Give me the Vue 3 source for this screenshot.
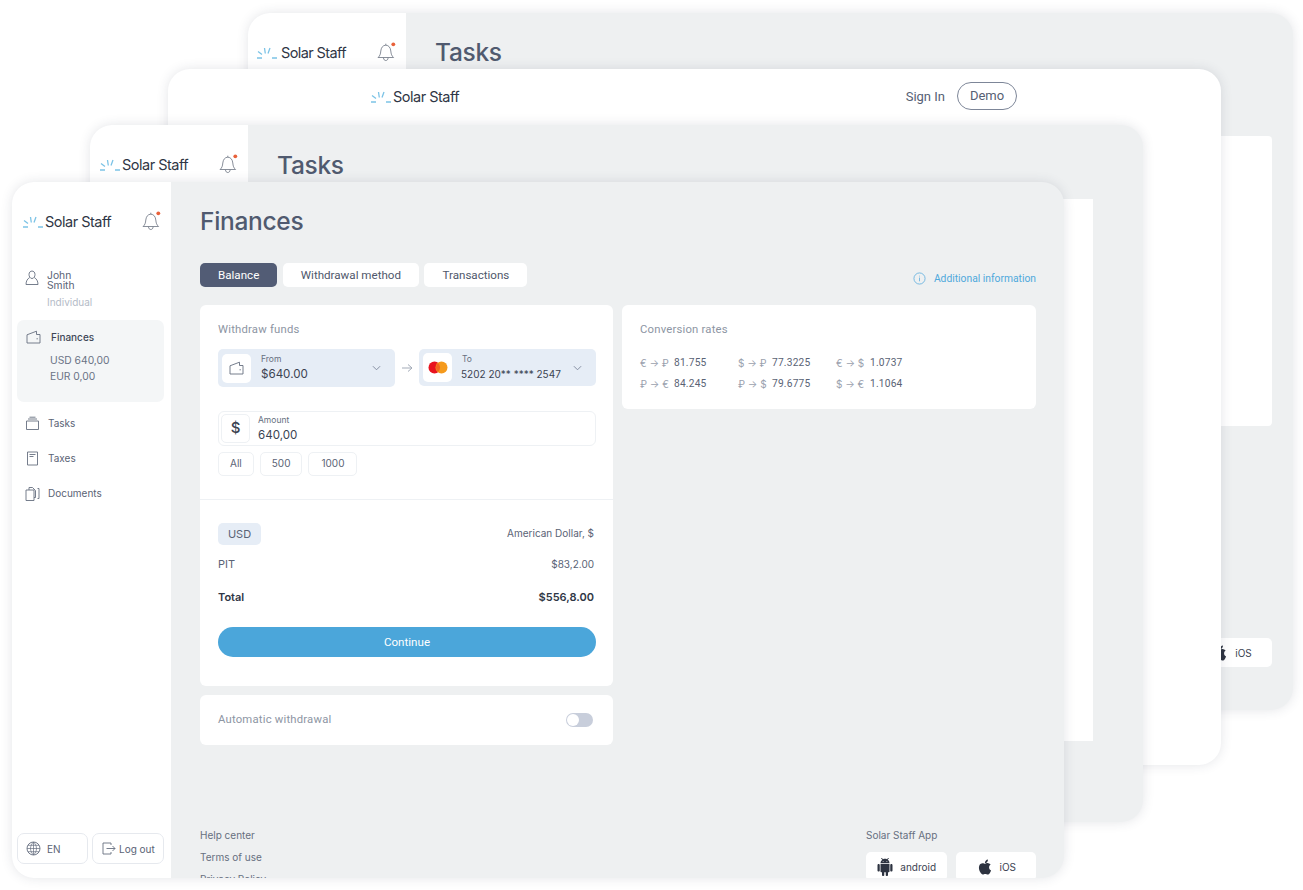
<template>
  <div class="canvas">
    <svg class="sprites" aria-hidden="true">
      <symbol id="mark" viewBox="0 0 20 12">
        <path d="M0 11h5M1 4.500l4 3M7.500 1l.8 5.500M13 1l-2 5.500M15 11h5" fill="none" stroke="#7cc3e6" stroke-width="1.300" />
      </symbol>
      <symbol id="bell" viewBox="0 0 19 20">
        <path d="M1 15.500c2-1.600 2.500-3.500 2.800-6.500.3-3.200 2-5.800 5-5.800s4.700 2.600 5 5.800c.3 3 .8 4.900 2.800 6.500zM6.500 15.800c0 3.600 4.600 3.600 4.600 0M8.800 3.200V1.700" fill="none" stroke="#6b7280" stroke-width=".8" />
        <circle cx="16.300" cy="2.300" r="1.900" fill="#e8613a" />
      </symbol>
      <symbol id="wallet" viewBox="0 0 15 14">
        <path d="M1 13V4.800L10.500 1.200V4.500H14V13ZM10.500 8.800h1.400" fill="none" stroke="#666f80" stroke-width=".9" />
      </symbol>
      <symbol id="chevron" viewBox="0 0 10 6">
        <path d="M1 1l4 4 4-4" fill="none" stroke="#7c8698" stroke-width="1" />
      </symbol>
      <symbol id="apple" viewBox="0 0 24 24">
        <path fill="#2d3340" d="M18.710 19.500c-.83 1.240-1.710 2.450-3.050 2.470-1.340.03-1.770-.79-3.290-.79-1.530 0-2 .77-3.270.82-1.310.05-2.300-1.320-3.140-2.530C4.250 17 2.940 12.450 4.700 9.390c.87-1.520 2.430-2.480 4.120-2.510 1.280-.02 2.500.87 3.290.87.78 0 2.260-1.070 3.810-.91.65.03 2.470.26 3.640 1.980-.09.06-2.170 1.280-2.150 3.810.03 3.020 2.650 4.030 2.680 4.040-.03.07-.42 1.440-1.380 2.830M13 3.500c.73-.83 1.940-1.460 2.940-1.500.13 1.170-.34 2.350-1.040 3.190-.69.85-1.830 1.510-2.950 1.420-.15-1.150.41-2.350 1.050-3.110z" />
      </symbol>
      <symbol id="android" viewBox="0 0 24 24">
        <path fill="#2d3340" d="M6 18c0 .55.45 1 1 1h1v3.500c0 .83.67 1.500 1.500 1.500s1.500-.67 1.500-1.500V19h2v3.500c0 .83.67 1.500 1.500 1.500s1.500-.67 1.500-1.500V19h1c.55 0 1-.45 1-1V8H6v10zM3.500 8C2.670 8 2 8.670 2 9.500v7c0 .83.67 1.500 1.500 1.500S5 17.330 5 16.500v-7C5 8.670 4.330 8 3.500 8zm17 0c-.83 0-1.500.67-1.500 1.500v7c0 .83.67 1.500 1.500 1.500s1.500-.67 1.500-1.500v-7c0-.83-.67-1.500-1.500-1.500zm-4.970-5.840l1.300-1.300c.2-.2.2-.51 0-.71-.2-.2-.51-.2-.71 0l-1.480 1.480C13.850 1.230 12.950 1 12 1c-.96 0-1.860.23-2.660.63L7.850.15c-.2-.2-.51-.2-.71 0-.2.2-.2.51 0 .71l1.310 1.310C6.970 3.260 6 5.010 6 7h12c0-1.990-.97-3.750-2.470-4.840zM10 5H9V4h1v1zm5 0h-1V4h1v1z" />
      </symbol>
    </svg>

    <section v-for="w in backWindows" :key="w.id" class="window" :class="w.id">
      <template v-if="w.tasks">
        <aside class="sidebar">
          <div class="brand">
            <svg class="mark"><use href="#mark" /></svg>
            <span class="brand-name">Solar Staff</span>
            <svg class="bell"><use href="#bell" /></svg>
          </div>
        </aside>
        <div class="main">
          <h1 class="title">Tasks</h1>
          <div class="task-card"></div>
          <div v-if="w.id === 'w1'" class="store store-solo">
            <svg class="store-icon"><use href="#apple" /></svg>
            iOS
          </div>
        </div>
      </template>
      <header v-else class="public-head">
        <div class="public-brand">
          <svg class="mark"><use href="#mark" /></svg>
          <span class="brand-name">Solar Staff</span>
        </div>
        <div class="public-actions">
          <span class="sign-in">Sign In</span>
          <span class="demo">Demo</span>
        </div>
      </header>
    </section>

    <section class="window w4">
      <aside class="sidebar">
        <div class="brand">
          <svg class="mark"><use href="#mark" /></svg>
          <span class="brand-name">Solar Staff</span>
          <svg class="bell"><use href="#bell" /></svg>
        </div>
        <div class="user">
          <svg class="user-icon" viewBox="0 0 14 16">
            <path d="M4 4.500c0-4.600 6-4.600 6 0 0 1.800-1 4-3 4s-3-2.200-3-4zM4.600 7.600C2.500 8.800 1 11 1 14.500h12c0-3.500-1.500-5.700-3.600-6.900" fill="none" stroke="#666f80" stroke-width=".9" />
          </svg>
          <div>
            <div class="user-name">John</div>
            <div class="user-name">Smith</div>
            <div class="user-type">Individual</div>
          </div>
        </div>
        <div class="finance-box">
          <div class="finance-head">
            <svg class="wallet"><use href="#wallet" /></svg>
            Finances
          </div>
          <div class="finance-values">USD 640,00<br />EUR 0,00</div>
        </div>
        <nav class="nav">
          <div class="nav-row">
            <svg class="nav-icon" viewBox="0 0 15 15">
              <path d="M1.500 5h12v8.500h-12zM3 3h9M4.500 1.200h6" fill="none" stroke="#666f80" stroke-width=".9" />
            </svg>
            Tasks
          </div>
          <div class="nav-row">
            <svg class="nav-icon" viewBox="0 0 15 15">
              <path d="M2.500 1h10v13h-10zM4.500 3.500h6M4.500 5.500h4" fill="none" stroke="#666f80" stroke-width=".9" />
            </svg>
            Taxes
          </div>
          <div class="nav-row">
            <svg class="nav-icon" viewBox="0 0 15 15">
              <path d="M1 4h8v10.500H1zM4 4V1.500h3.500l3 3v7H9M12.500 2.500h1.500v10h-1.500" fill="none" stroke="#666f80" stroke-width=".9" />
            </svg>
            Documents
          </div>
        </nav>
        <div class="side-actions">
          <button class="side-btn lang">
            <svg class="nav-icon" viewBox="0 0 15 15">
              <circle cx="7.500" cy="7.500" r="6.500" fill="none" stroke="#666f80" stroke-width=".9" />
              <path d="M1 7.500h13M2 4.300h11M2 10.700h11M7.500 1v13M7.500 1c-4 4-4 9 0 13M7.500 1c4 4 4 9 0 13" fill="none" stroke="#666f80" stroke-width=".7" />
            </svg>
            EN
          </button>
          <button class="side-btn logout">
            <svg class="nav-icon" viewBox="0 0 15 15">
              <path d="M10 4V2H2v11h8v-2M5.500 7.500H14M11.500 5l2.500 2.500-2.500 2.500" fill="none" stroke="#666f80" stroke-width=".9" />
            </svg>
            Log out
          </button>
        </div>
      </aside>

      <div class="main">
        <h1 class="title">Finances</h1>
        <div class="tabs-row">
          <div class="tabs">
            <span v-for="tab in tabs" :key="tab" class="tab" :class="{ active: tab === 'Balance' }">{{ tab }}</span>
          </div>
          <span class="info">
            <svg class="info-icon" viewBox="0 0 14 14">
              <circle cx="7" cy="7" r="6" fill="none" stroke="#62b0de" stroke-width=".9" />
              <path d="M7 4v.8M7 6v4" fill="none" stroke="#62b0de" stroke-width=".9" />
            </svg>
            Additional information
          </span>
        </div>

        <div class="columns">
          <div class="col">
            <div class="card withdraw">
              <div class="card-title">Withdraw funds</div>
              <div class="transfer">
                <div class="select">
                  <span class="select-icon"><svg class="wallet"><use href="#wallet" /></svg></span>
                  <div class="select-text">
                    <div class="small-label">From</div>
                    <div class="select-value">$640.00</div>
                  </div>
                  <svg class="chevron"><use href="#chevron" /></svg>
                </div>
                <svg class="arrow" viewBox="0 0 24 10">
                  <path d="M7 5h10M13 1.500l4 3.500-4 3.500" fill="none" stroke="#a3abb8" stroke-width="1" />
                </svg>
                <div class="select select-to">
                  <span class="select-icon">
                    <svg class="mc" viewBox="0 0 20 13">
                      <circle cx="6.500" cy="6.500" r="6" fill="#e8131f" />
                      <circle cx="13.500" cy="6.500" r="6" fill="#f59a1c" />
                      <path d="M10 2a6 6 0 0 1 0 9 6 6 0 0 1 0-9z" fill="#f2641f" />
                    </svg>
                  </span>
                  <div class="select-text">
                    <div class="small-label">To</div>
                    <div class="select-value card-number">5202 20** **** 2547</div>
                  </div>
                  <svg class="chevron"><use href="#chevron" /></svg>
                </div>
              </div>
              <div class="amount">
                <span class="amount-icon">$</span>
                <div>
                  <div class="small-label">Amount</div>
                  <div class="select-value">640,00</div>
                </div>
              </div>
              <div class="chips">
                <span v-for="c in chips" :key="c" class="chip">{{ c }}</span>
              </div>
              <div class="divider"></div>
              <div class="line line-head">
                <span class="badge">USD</span>
                <span class="currency">American Dollar, $</span>
              </div>
              <div class="line line-pit">
                <span>PIT</span>
                <span class="currency">$83,2.00</span>
              </div>
              <div class="line line-total">
                <span>Total</span>
                <span>$556,8.00</span>
              </div>
              <button class="continue">Continue</button>
            </div>
            <div class="card auto">
              <span class="card-title">Automatic withdrawal</span>
              <span class="switch"></span>
            </div>
          </div>

          <div class="card rates">
            <div class="card-title">Conversion rates</div>
            <div class="rate-grid">
              <div v-for="r in rates" :key="r.pair" class="rate">
                <span class="pair">{{ r.pair }}</span>
                <span class="rate-value">{{ r.value }}</span>
              </div>
            </div>
          </div>
        </div>

        <footer class="footer">
          <div class="links">
            <div>Help center</div>
            <div>Terms of use</div>
            <div>Privacy Policy</div>
          </div>
          <div class="apps">
            <div>Solar Staff App</div>
            <div class="stores">
              <div class="store">
                <svg class="store-icon"><use href="#android" /></svg>
                android
              </div>
              <div class="store">
                <svg class="store-icon"><use href="#apple" /></svg>
                iOS
              </div>
            </div>
          </div>
        </footer>
      </div>
    </section>
  </div>
</template>

<script setup>
const backWindows = [
  { id: 'w1', tasks: true },
  { id: 'w2', tasks: false },
  { id: 'w3', tasks: true }
]
const tabs = ['Balance', 'Withdrawal method', 'Transactions']
const chips = ['All', '500', '1000']
const rates = [
  { pair: '€ → ₽', value: '81.755' },
  { pair: '$ → ₽', value: '77.3225' },
  { pair: '€ → $', value: '1.0737' },
  { pair: '₽ → €', value: '84.245' },
  { pair: '₽ → $', value: '79.6775' },
  { pair: '$ → €', value: '1.1064' }
]
</script>

<style>
html,
body {
  background: #fff;
  overflow: hidden;
}
</style>

<style scoped>
.canvas {
  position: relative;
  width: 1303px;
  height: 890px;
  overflow: hidden;
  background: #fff;
  font-family: Inter, "Noto Sans", sans-serif;
  color: #4f586b;
}
.sprites {
  position: absolute;
  width: 0;
  height: 0;
}
.window {
  position: absolute;
  display: flex;
  overflow: hidden;
  background: #eef0f1;
  border-radius: 22px;
  box-shadow: 0 0 12px rgba(45, 55, 75, 0.13);
}
.w1 {
  left: 248px;
  top: 13px;
  width: 1045px;
  height: 697px;
}
.w2 {
  left: 168px;
  top: 69px;
  width: 1053px;
  height: 696px;
  background: #fff;
}
.w3 {
  left: 90px;
  top: 125px;
  width: 1053px;
  height: 697px;
}
.w4 {
  left: 12px;
  top: 182px;
  width: 1052px;
  height: 696px;
}
.sidebar {
  display: flex;
  flex-direction: column;
  flex: none;
  width: 159px;
  background: #fff;
}
.w1 .sidebar,
.w3 .sidebar {
  width: 158px;
}
.brand {
  display: flex;
  align-items: center;
  height: 22px;
  margin-top: 28px;
  padding: 0 10px 0 11px;
}
.w1 .brand {
  padding-left: 9px;
}
.w3 .brand {
  padding-left: 10px;
}
.mark {
  flex: none;
  width: 20px;
  height: 12px;
  margin-top: 1px;
}
.brand-name {
  margin-left: 2px;
  font-size: 14.500px;
  font-weight: 400;
  letter-spacing: -0.5px;
  color: #2f3645;
  white-space: nowrap;
}
.w1 .brand-name {
  margin-left: 4px;
  letter-spacing: -0.6px;
}
.bell {
  flex: none;
  width: 19px;
  height: 20px;
  margin-left: auto;
}
.user {
  display: flex;
  gap: 8px;
  margin-top: 38px;
  padding-left: 13px;
}
.user-icon {
  flex: none;
  width: 14px;
  height: 16px;
}
.user-name {
  font-size: 10.300px;
  line-height: 10px;
  color: #5a6375;
}
.user-type {
  margin-top: 6px;
  font-size: 10px;
  line-height: 12px;
  color: #b4bbc7;
}
.nav-icon {
  flex: none;
  width: 15px;
  height: 15px;
}
.finance-box {
  height: 82px;
  margin: 12px 7px 0 5px;
  padding: 10px 9px;
  box-sizing: border-box;
  background: #f4f6f7;
  border-radius: 7px;
}
.finance-head {
  display: flex;
  align-items: center;
  gap: 10px;
  font-size: 10px;
  line-height: 13px;
  font-weight: 500;
  color: #3e4656;
}
.wallet {
  width: 15px;
  height: 14px;
  flex: none;
}
.finance-values {
  margin-top: 8px;
  padding-left: 24px;
  font-size: 10.300px;
  line-height: 16px;
  color: #6a7385;
}
.nav {
  display: flex;
  flex-direction: column;
  gap: 19px;
  margin-top: 13px;
  padding-left: 13px;
}
.nav-row {
  display: flex;
  align-items: center;
  gap: 8px;
  font-size: 10px;
  line-height: 16px;
  color: #5a6375;
}
.side-actions {
  display: flex;
  gap: 4px;
  margin-top: auto;
  padding: 0 7px 14px 5px;
}
.side-btn {
  display: flex;
  flex: none;
  align-items: center;
  gap: 6px;
  height: 31px;
  padding: 0 8px;
  box-sizing: border-box;
  background: #fff;
  border: 1px solid #e6e9ee;
  border-radius: 7px;
  font: 10px Inter, sans-serif;
  color: #5a6375;
  white-space: nowrap;
}
.lang {
  width: 71px;
}
.logout {
  width: 72px;
  gap: 3px;
}
.main {
  flex: 1;
  min-width: 0;
  padding: 0 28px 0 29px;
}
.title {
  margin: 24px 0 0;
  font-size: 24.500px;
  line-height: 30px;
  font-weight: 500;
  letter-spacing: -0.3px;
  color: #505a6f;
}
.task-card {
  background: #fff;
  border-radius: 4px;
}
.w1 .task-card {
  height: 290px;
  margin: 69px -7px 0 0;
}
.w3 .title {
  margin-top: 25px;
}
.w3 .task-card {
  height: 542px;
  margin: 19px 22px 0 0;
  border-radius: 0;
}
.store-solo {
  width: 81px;
  margin: 212px -7px 0 auto;
}
.public-head {
  display: flex;
  align-items: center;
  justify-content: space-between;
  width: 100%;
  height: 54px;
  padding: 0 204px 0 203px;
  box-sizing: border-box;
}
.public-brand,
.public-actions {
  display: flex;
  align-items: center;
}
.public-actions {
  gap: 12px;
  font-family: Roboto, sans-serif;
  font-size: 13px;
  color: #566074;
}
.demo {
  width: 58px;
  line-height: 26px;
  text-align: center;
  border: 1px solid #7d8698;
  border-radius: 15px;
}
.tabs-row {
  display: flex;
  justify-content: space-between;
  margin-top: 27px;
}
.tabs {
  display: flex;
  gap: 5.500px;
}
.tab {
  height: 24px;
  padding: 0 18px;
  background: #fff;
  border-radius: 5px;
  font-family: Roboto, sans-serif;
  font-size: 11.600px;
  line-height: 24px;
  color: #4f586b;
}
.tab.active {
  background: #525c75;
  color: #fff;
}
.info {
  display: flex;
  align-items: center;
  gap: 8px;
  padding-top: 6px;
  font-family: Roboto, sans-serif;
  font-size: 10.300px;
  color: #4fa9dc;
}
.info-icon {
  width: 13px;
  height: 13px;
}
.columns {
  display: grid;
  grid-template-columns: 413px 414px;
  gap: 9px;
  align-items: start;
  margin-top: 18px;
}
.col {
  display: flex;
  flex-direction: column;
  gap: 9px;
}
.card {
  background: #fff;
  border-radius: 6px;
}
.card-title {
  font-family: Roboto, sans-serif;
  font-size: 11.300px;
  line-height: 16px;
  letter-spacing: 0.2px;
  color: #8d95a3;
}
.withdraw {
  padding: 17px 17px 29px 18px;
}
.transfer {
  display: flex;
  align-items: flex-start;
  margin-top: 11px;
}
.select {
  display: flex;
  align-items: center;
  flex: none;
  width: 177px;
  height: 38px;
  box-sizing: border-box;
  padding: 0 14px 0 4px;
  background: #e6edf6;
  border-radius: 5px;
}
.select-to {
  height: 37px;
}
.select-icon {
  display: flex;
  flex: none;
  align-items: center;
  justify-content: center;
  width: 29px;
  height: 29px;
  background: #fff;
  border-radius: 5px;
}
.select-text {
  flex: 1;
  margin-left: 10px;
  min-width: 0;
}
.small-label {
  font-size: 8.500px;
  line-height: 11px;
  color: #666f80;
}
.select-value {
  margin-top: 2px;
  font-size: 11.600px;
  line-height: 15px;
  color: #3b4352;
  white-space: nowrap;
}
.card-number {
  font-size: 10px;
  margin-left: -1px;
}
.chevron {
  flex: none;
  width: 9px;
  height: 6px;
}
.arrow {
  flex: none;
  width: 24px;
  height: 10px;
  margin-top: 14px;
}
.mc {
  width: 20px;
  height: 13px;
}
.amount {
  display: flex;
  align-items: center;
  gap: 8px;
  height: 35px;
  box-sizing: border-box;
  margin-top: 24px;
  padding-left: 2px;
  border: 1px solid #eef1f4;
  border-radius: 6px;
}
.amount-icon {
  flex: none;
  width: 27px;
  height: 27px;
  border: 1px solid #eef1f4;
  border-radius: 5px;
  text-align: center;
  font-size: 15px;
  line-height: 26px;
  font-weight: 500;
  color: #3b4352;
}
.chips {
  display: flex;
  gap: 6px;
  margin-top: 6px;
}
.chip {
  height: 22px;
  padding: 0 11px;
  border: 1px solid #eef1f4;
  border-radius: 5px;
  font-size: 10px;
  line-height: 21px;
  color: #5a6375;
}
.chip:nth-child(3) {
  padding: 0 12px;
}
.divider {
  height: 1px;
  margin: 23px -17px 23px -18px;
  background: #eef1f4;
}
.line {
  display: flex;
  align-items: center;
  justify-content: space-between;
  padding-right: 2px;
  font-size: 11px;
  line-height: 16px;
  color: #5a6375;
}
.badge {
  width: 43px;
  height: 22px;
  background: #e6edf6;
  border-radius: 5px;
  text-align: center;
  line-height: 22px;
}
.currency {
  font-size: 10px;
}
.line-head .currency {
  margin-top: -2px;
}
.line-pit {
  margin-top: 11px;
}
.line-total {
  margin-top: 17px;
  font-weight: 600;
  color: #2f3645;
}
.continue {
  display: block;
  width: 100%;
  height: 30px;
  margin-top: 22px;
  padding: 0;
  background: #4ba6da;
  border: 0;
  border-radius: 15px;
  font-family: Roboto, sans-serif;
  font-size: 11.600px;
  color: #fff;
}
.auto {
  display: flex;
  align-items: center;
  justify-content: space-between;
  height: 50px;
  padding: 0 20px 0 18px;
}
.switch {
  position: relative;
  width: 27px;
  height: 14px;
  background: #c8cedb;
  border-radius: 7px;
}
.switch::after {
  content: "";
  position: absolute;
  left: 1px;
  top: 1px;
  width: 12px;
  height: 12px;
  background: #fff;
  border-radius: 50%;
}
.rates {
  height: 104px;
  box-sizing: border-box;
  padding: 17px 18px;
}
.rate-grid {
  display: grid;
  grid-template-columns: repeat(3, 98px);
  row-gap: 5px;
  margin-top: 17px;
}
.rate {
  display: flex;
  font-family: Roboto, sans-serif;
  font-size: 10.200px;
  line-height: 16px;
  letter-spacing: 0.2px;
}
.pair {
  width: 34px;
  font-family: Inter, sans-serif;
  font-size: 10px;
  letter-spacing: 0;
  color: #9aa1ae;
  white-space: nowrap;
}
.rate-value {
  color: #5a6375;
}
.footer {
  display: flex;
  justify-content: space-between;
  margin-top: 79px;
  font-size: 10px;
  line-height: 22px;
  color: #666f80;
}
.apps {
  width: 170px;
}
.stores {
  display: flex;
  gap: 9px;
  margin-top: 6px;
}
.store {
  display: flex;
  flex: 1;
  align-items: center;
  justify-content: center;
  gap: 6px;
  height: 29px;
  background: #fff;
  border-radius: 5px;
  font-size: 10px;
  color: #3b4352;
}
.store-icon {
  flex: none;
  width: 18px;
  height: 18px;
}
</style>
